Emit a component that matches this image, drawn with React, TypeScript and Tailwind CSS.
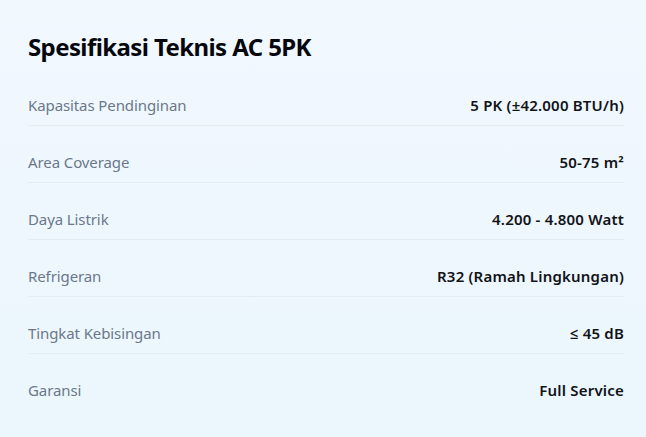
const specs = [
  { label: 'Kapasitas Pendinginan', value: '5 PK (±42.000 BTU/h)' },
  { label: 'Area Coverage', value: '50-75 m²' },
  { label: 'Daya Listrik', value: '4.200 - 4.800 Watt' },
  { label: 'Refrigeran', value: 'R32 (Ramah Lingkungan)' },
  { label: 'Tingkat Kebisingan', value: '≤ 45 dB' },
  { label: 'Garansi', value: 'Full Service' },
];

export default function App() {
  return (
    <div
      className="min-h-screen w-full bg-gradient-to-b from-[#f1f8fe] to-[#ebf6fd] pt-[31px] pl-[28px] pr-[22px]"
      style={{ fontFamily: '"Noto Sans", "Open Sans", sans-serif' }}
    >
      <h2 className="text-2xl leading-8 font-bold tracking-[-0.6px] text-[#05070d]">Spesifikasi Teknis AC 5PK</h2>
      <div className="mt-[6px]">
        {specs.map((s, i) => (
          <div
            key={s.label}
            className={`flex items-center justify-between pt-6 pb-2 text-[15px] leading-6 ${
              i < specs.length - 1 ? 'border-b border-[#e2edf5]' : ''
            }`}
          >
            <span className="tracking-[-0.1px] text-[#6b7889]">{s.label}</span>
            <span className="font-semibold tracking-[0.2px] text-[#111318]">{s.value}</span>
          </div>
        ))}
      </div>
    </div>
  );
}
